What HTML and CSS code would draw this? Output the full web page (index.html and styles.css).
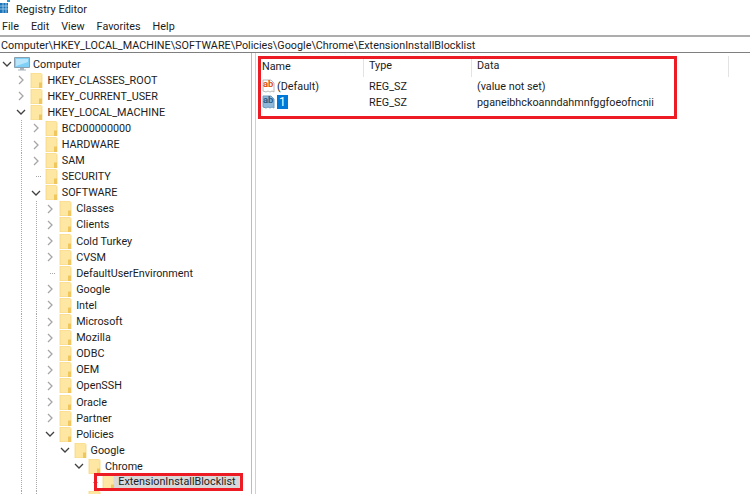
FILE: index.html
```html
<!DOCTYPE html>
<html lang="en">
<head>
  <meta charset="UTF-8">
  <link rel="stylesheet" href="styles.css">
  <title>Registry Editor</title>
</head>
<body>
  <svg class="defs" width="0" height="0">
    <symbol id="folder" viewBox="0 0 13 15">
      <path d="M1 0h9.500l1.500 1.500v13.500h-11z" fill="#fde7a3"/>
      <path d="M1 0h9.500l1.500 1.500v13.500h-11z" fill="none" stroke="#f5d67f" stroke-width=".8"/>
      <path d="M9 9.500h3v5.500h-3z" fill="#f0c65f"/>
    </symbol>
    <symbol id="chev-right" viewBox="0 0 8 10">
      <path d="M2 1l4 4-4 4" fill="none" stroke="#a6a6a6" stroke-width="1.300"/>
    </symbol>
    <symbol id="chev-down" viewBox="0 0 10 8">
      <path d="M1 2l4 4 4-4" fill="none" stroke="#404040" stroke-width="1.300"/>
    </symbol>
    <symbol id="ab" viewBox="0 0 13 14">
      <path d="M1 1h8l3 3v9l-2-1-2 1-2-1-2 1-3-1z" fill="#fff" stroke="#b9b9b9"/>
    </symbol>
  </svg>

  <div class="titlebar">
    <svg class="app-icon" width="11" height="16" viewBox="0 0 11 16">
      <path d="M0 4h8v10h-8z" fill="#1c74b8"/>
      <path d="M0 7h8M0 10h8M3 4v10M6 4v10" stroke="#bfe0f5" stroke-width=".7"/>
      <path d="M7 0h3v3h-3z" fill="#2e9ad6"/>
    </svg>
    <span>Registry Editor</span>
  </div>
  <div class="menu">
    <span>File</span><span>Edit</span><span>View</span><span>Favorites</span><span>Help</span>
  </div>
  <div class="address">Computer\HKEY_LOCAL_MACHINE\SOFTWARE\Policies\Google\Chrome\ExtensionInstallBlocklist</div>

  <div class="panes">
    <div class="tree">
      <div class="row"><span class="twist"><svg width="10" height="8"><use href="#chev-down"/></svg></span>
        <svg class="pc" width="16" height="14" viewBox="0 0 16 14">
          <path d="M.5 .5h15v10h-15z" fill="#7fd0f7" stroke="#8aa0b0"/>
          <path d="M2 2h12v3l-12 4z" fill="#b9e6fb"/>
          <path d="M6 11h4v1.500h2v1h-8v-1h2z" fill="#a9b4bc"/>
        </svg>
        <span class="pc-label">Computer</span></div>

      <div class="row"><i class="gap"></i><span class="twist"><svg width="8" height="10"><use href="#chev-right"/></svg></span><svg class="fld" width="13" height="15"><use href="#folder"/></svg><span>HKEY_CLASSES_ROOT</span></div>
      <div class="row"><i class="gap"></i><span class="twist"><svg width="8" height="10"><use href="#chev-right"/></svg></span><svg class="fld" width="13" height="15"><use href="#folder"/></svg><span>HKEY_CURRENT_USER</span></div>
      <div class="row"><i class="gap"></i><span class="twist"><svg width="10" height="8"><use href="#chev-down"/></svg></span><svg class="fld" width="13" height="15"><use href="#folder"/></svg><span>HKEY_LOCAL_MACHINE</span></div>

      <div class="row"><i class="gap"></i><i class="gap line"></i><span class="twist"><svg width="8" height="10"><use href="#chev-right"/></svg></span><svg class="fld" width="13" height="15"><use href="#folder"/></svg><span>BCD00000000</span></div>
      <div class="row"><i class="gap"></i><i class="gap line"></i><span class="twist"><svg width="8" height="10"><use href="#chev-right"/></svg></span><svg class="fld" width="13" height="15"><use href="#folder"/></svg><span>HARDWARE</span></div>
      <div class="row"><i class="gap"></i><i class="gap line"></i><span class="twist"><svg width="8" height="10"><use href="#chev-right"/></svg></span><svg class="fld" width="13" height="15"><use href="#folder"/></svg><span>SAM</span></div>
      <div class="row"><i class="gap"></i><i class="gap line"></i><span class="twist leaf"></span><svg class="fld" width="13" height="15"><use href="#folder"/></svg><span>SECURITY</span></div>
      <div class="row"><i class="gap"></i><i class="gap line"></i><span class="twist"><svg width="10" height="8"><use href="#chev-down"/></svg></span><svg class="fld" width="13" height="15"><use href="#folder"/></svg><span>SOFTWARE</span></div>

      <div class="row"><i class="gap"></i><i class="gap line"></i><i class="gap line"></i><span class="twist"><svg width="8" height="10"><use href="#chev-right"/></svg></span><svg class="fld" width="13" height="15"><use href="#folder"/></svg><span>Classes</span></div>
      <div class="row"><i class="gap"></i><i class="gap line"></i><i class="gap line"></i><span class="twist"><svg width="8" height="10"><use href="#chev-right"/></svg></span><svg class="fld" width="13" height="15"><use href="#folder"/></svg><span>Clients</span></div>
      <div class="row"><i class="gap"></i><i class="gap line"></i><i class="gap line"></i><span class="twist"><svg width="8" height="10"><use href="#chev-right"/></svg></span><svg class="fld" width="13" height="15"><use href="#folder"/></svg><span>Cold Turkey</span></div>
      <div class="row"><i class="gap"></i><i class="gap line"></i><i class="gap line"></i><span class="twist"><svg width="8" height="10"><use href="#chev-right"/></svg></span><svg class="fld" width="13" height="15"><use href="#folder"/></svg><span>CVSM</span></div>
      <div class="row"><i class="gap"></i><i class="gap line"></i><i class="gap line"></i><span class="twist leaf"></span><svg class="fld" width="13" height="15"><use href="#folder"/></svg><span>DefaultUserEnvironment</span></div>
      <div class="row"><i class="gap"></i><i class="gap line"></i><i class="gap line"></i><span class="twist"><svg width="8" height="10"><use href="#chev-right"/></svg></span><svg class="fld" width="13" height="15"><use href="#folder"/></svg><span>Google</span></div>
      <div class="row"><i class="gap"></i><i class="gap line"></i><i class="gap line"></i><span class="twist"><svg width="8" height="10"><use href="#chev-right"/></svg></span><svg class="fld" width="13" height="15"><use href="#folder"/></svg><span>Intel</span></div>
      <div class="row"><i class="gap"></i><i class="gap line"></i><i class="gap line"></i><span class="twist"><svg width="8" height="10"><use href="#chev-right"/></svg></span><svg class="fld" width="13" height="15"><use href="#folder"/></svg><span>Microsoft</span></div>
      <div class="row"><i class="gap"></i><i class="gap line"></i><i class="gap line"></i><span class="twist"><svg width="8" height="10"><use href="#chev-right"/></svg></span><svg class="fld" width="13" height="15"><use href="#folder"/></svg><span>Mozilla</span></div>
      <div class="row"><i class="gap"></i><i class="gap line"></i><i class="gap line"></i><span class="twist"><svg width="8" height="10"><use href="#chev-right"/></svg></span><svg class="fld" width="13" height="15"><use href="#folder"/></svg><span>ODBC</span></div>
      <div class="row"><i class="gap"></i><i class="gap line"></i><i class="gap line"></i><span class="twist"><svg width="8" height="10"><use href="#chev-right"/></svg></span><svg class="fld" width="13" height="15"><use href="#folder"/></svg><span>OEM</span></div>
      <div class="row"><i class="gap"></i><i class="gap line"></i><i class="gap line"></i><span class="twist"><svg width="8" height="10"><use href="#chev-right"/></svg></span><svg class="fld" width="13" height="15"><use href="#folder"/></svg><span>OpenSSH</span></div>
      <div class="row"><i class="gap"></i><i class="gap line"></i><i class="gap line"></i><span class="twist"><svg width="8" height="10"><use href="#chev-right"/></svg></span><svg class="fld" width="13" height="15"><use href="#folder"/></svg><span>Oracle</span></div>
      <div class="row"><i class="gap"></i><i class="gap line"></i><i class="gap line"></i><span class="twist"><svg width="8" height="10"><use href="#chev-right"/></svg></span><svg class="fld" width="13" height="15"><use href="#folder"/></svg><span>Partner</span></div>
      <div class="row"><i class="gap"></i><i class="gap line"></i><i class="gap line"></i><span class="twist"><svg width="10" height="8"><use href="#chev-down"/></svg></span><svg class="fld" width="13" height="15"><use href="#folder"/></svg><span>Policies</span></div>

      <div class="row"><i class="gap"></i><i class="gap line"></i><i class="gap line"></i><i class="gap"></i><span class="twist"><svg width="10" height="8"><use href="#chev-down"/></svg></span><svg class="fld" width="13" height="15"><use href="#folder"/></svg><span>Google</span></div>
      <div class="row"><i class="gap"></i><i class="gap line"></i><i class="gap line"></i><i class="gap"></i><i class="gap"></i><span class="twist"><svg width="10" height="8"><use href="#chev-down"/></svg></span><svg class="fld" width="13" height="15"><use href="#folder"/></svg><span>Chrome</span></div>
      <div class="row"><i class="gap"></i><i class="gap line"></i><i class="gap line"></i><i class="gap"></i><i class="gap"></i><i class="gap"></i><span class="twist leaf"></span><svg class="fld" width="13" height="15"><use href="#folder"/></svg><span class="picked">ExtensionInstallBlocklist</span></div>
      <div class="row"><i class="gap"></i><i class="gap line"></i><i class="gap line"></i><i class="gap"></i><i class="gap"></i><span class="twist leaf"></span><svg class="fld" width="13" height="15"><use href="#folder"/></svg></div>
      <div class="mark mark-tree"></div>
    </div>

    <div class="values">
      <div class="cols head">
        <div class="col-name">Name</div>
        <div class="col-type">Type</div>
        <div class="col-data">Data</div>
      </div>
      <div class="cols">
        <div class="col-name"><svg class="ab" width="13" height="14"><use href="#ab"/></svg><b class="ab-txt">ab</b><span class="val-name">(Default)</span></div>
        <div class="col-type">REG_SZ</div>
        <div class="col-data">(value not set)</div>
      </div>
      <div class="cols">
        <div class="col-name"><svg class="ab" width="13" height="14" viewBox="0 0 13 14"><path d="M1 1h8l3 3v9l-2-1-2 1-2-1-2 1-3-1z" fill="#8fb8da" stroke="#6f9cc2"/></svg><b class="ab-txt sel">ab</b><span class="val-name renaming">1</span></div>
        <div class="col-type">REG_SZ</div>
        <div class="col-data">pganeibhckoanndahmnfggfoeofncnii</div>
      </div>
      <div class="mark mark-list"></div>
    </div>
  </div>
</body>
</html>
```
FILE: styles.css
```css
*, *:before, *:after {
  margin: 0;
  padding: 0;
  box-sizing: border-box;
}
html, body {
  height: 100%;
  overflow: hidden;
}
body {
  background: #ffffff;
  color: #1c1c1c;
  font-family: Roboto, sans-serif;
  font-size: 10.8px;
  display: flex;
  flex-direction: column;
}
.defs {
  position: absolute;
}

.titlebar {
  height: 18px;
  display: flex;
  align-items: center;
  font-size: 11px;
}
.app-icon {
  margin: -4px 5px 0 0;
}
.menu {
  height: 17px;
  display: flex;
  align-items: center;
  gap: 12px;
  padding-left: 2px;
}
.address {
  height: 18px;
  border-top: 2px solid #adadad;
  border-bottom: 1px solid #7f7f7f;
  line-height: 17px;
  white-space: nowrap;
  overflow: hidden;
  padding-left: 1px;
}

.panes {
  flex: 1;
  display: flex;
  min-height: 0;
}
.tree {
  position: relative;
  width: 252px;
  padding-top: 3px;
  border-right: 1px solid #bdbdbd;
  overflow: hidden;
}
.row {
  height: 16.1px;
  flex: none;
  display: flex;
  align-items: center;
  white-space: nowrap;
}
.gap {
  flex: none;
  width: 14.4px;
  height: 100%;
}
.gap.line {
  background: repeating-linear-gradient(#a8a8a8 0 1px, transparent 1px 2px) 7px 0 / 1px 100% no-repeat;
}
.twist {
  flex: none;
  width: 14px;
  height: 100%;
  display: flex;
  align-items: center;
  justify-content: center;
}
.twist.leaf {
  background: repeating-linear-gradient(90deg, #a8a8a8 0 1px, transparent 1px 2px) 7px 50% / 6px 1px no-repeat;
}
.fld {
  flex: none;
  margin: 0 4px 0 2px;
}
.pc {
  flex: none;
  margin: 0 3px 0 0;
}
.picked {
  background: #d9d9d9;
  padding: 0 4px;
  margin-left: -5px;
  line-height: 14px;
}

.values {
  position: relative;
  flex: 1;
  margin-left: 3px;
  border-left: 1px solid #d0d0d0;
}
.cols {
  display: flex;
  height: 16px;
  align-items: center;
  white-space: nowrap;
}
.cols.head {
  height: 25px;
  padding-top: 2px;
}
.col-name {
  width: 108px;
  padding-left: 6px;
  display: flex;
  align-items: center;
  position: relative;
}
.col-type {
  width: 108px;
  padding-left: 5px;
}
.col-data {
  width: 257px;
  padding-left: 5px;
}
.head > div {
  height: 21px;
  line-height: 20px;
  border-right: 1px solid #e3e3e3;
}
.ab {
  flex: none;
}
.ab-txt {
  position: absolute;
  left: 7px;
  top: 0;
  font-size: 9.5px;
  line-height: 10px;
  color: #e0561c;
}
.ab-txt.sel {
  color: #2f5f8a;
}
.val-name {
  margin-left: 2px;
}
.renaming {
  background: #0078d7;
  color: #ffffff;
  font-size: 12px;
  width: 11px;
  height: 14px;
  line-height: 14px;
  padding-left: 2px;
}

/* red annotation boxes drawn over the shot */
.mark {
  position: absolute;
  border: 3px solid #ed1c24;
  pointer-events: none;
}
.mark-list {
  left: 2px;
  top: 3px;
  width: 419px;
  height: 63px;
}
.mark-tree {
  left: 94px;
  top: 420px;
  width: 149px;
  height: 18px;
}
```
